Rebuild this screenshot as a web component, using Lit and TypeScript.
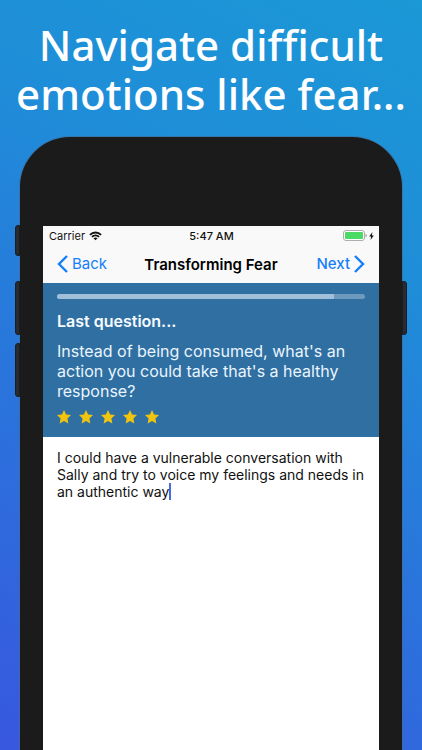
import { LitElement, html, css } from "lit";
import { customElement, property, state } from "lit/decorators.js";

@customElement("star-row")
class StarRow extends LitElement {
  @property({ type: Number }) count = 5;

  static styles = css`
    :host { display: flex; gap: 8px; }
    .star { width: 14px; height: 14px; display: block; fill: #f1c40f; }
  `;

  render() {
    return Array.from({ length: this.count }, () => html`
      <svg class="star" viewBox="0 0 28 28" aria-hidden="true">
        <path d="M14 0 18.200 9 28 10.200 20.800 17 22.700 27 14 22 5.300 27 7.200 17 0 10.200 9.800 9Z"/>
      </svg>`);
  }
}

@customElement("status-bar")
class StatusBar extends LitElement {
  static styles = css`
    :host {
      display: grid;
      grid-template-columns: 1fr auto 1fr;
      align-items: center;
      height: 19px;
      padding: 0 5px 0 6px;
      font-size: 11px;
      color: #111;
    }
    .left, .right { display: flex; align-items: center; }
    .left { gap: 4px; }
    .right { justify-content: flex-end; gap: 2px; }
    .time { font-weight: 500; }
    .icon { display: block; }
  `;

  render() {
    return html`
      <div class="left">
        <span>Carrier</span>
        <svg class="icon" width="13" height="10" viewBox="0 0 28 20" aria-label="Wi-Fi">
          <g fill="none" stroke="#111" stroke-width="4">
            <path d="M2 7.500C8.800 .8 19.200 .8 26 7.500"/>
            <path d="M6.300 12C10.600 7.800 17.400 7.800 21.700 12"/>
          </g>
          <path d="M9.600 14.800C12.100 12.400 15.900 12.400 18.400 14.800L14 19.200Z" fill="#111"/>
        </svg>
      </div>
      <time class="time">5:47 AM</time>
      <div class="right">
        <svg class="icon" width="24" height="11" viewBox="0 0 48 22" aria-label="Battery charging">
          <rect x="1" y="1" width="42" height="20" rx="5" fill="#fff" stroke="#999" stroke-width="1.600"/>
          <rect x="4" y="4" width="36" height="14" rx="2" fill="#4cd964"/>
          <path d="M45 7.500Q47.500 8.500 47.500 11T45 14.500Z" fill="#999"/>
        </svg>
        <svg class="icon" width="5" height="8" viewBox="0 0 10 16" aria-hidden="true">
          <path d="M7 0 .3 9H4.300L3 16 9.700 6.800H5.700Z" fill="#111"/>
        </svg>
      </div>`;
  }
}

@customElement("app-root")
class AppRoot extends LitElement {
  @state() private answer =
    "I could have a vulnerable conversation with Sally and try to voice my feelings and needs in an authentic way";
  @state() private progress = 90;

  static styles = css`
    :host {
      display: flex;
      flex-direction: column;
      box-sizing: border-box;
      min-height: 100vh;
      padding: 20px 20px 0;
      background: linear-gradient(207deg, #1b98d6 0%, #1f8dd8 30%, #2a74dc 62%, #3857df 100%);
      font-family: Inter, "Liberation Sans", sans-serif;
    }
    .headline {
      margin: 0 -20px 19px;
      text-align: center;
      color: #fff;
      font: 500 42px/49px "Noto Sans", "Open Sans", sans-serif;
    }
    .phone {
      position: relative;
      flex: 1;
      display: flex;
      flex-direction: column;
      box-sizing: border-box;
      padding: 89px 23px 0;
      border-radius: 50px 50px 0 0;
      background: #1b1b1b;
      box-shadow: 0 0 0 1px rgba(70, 105, 145, 0.6);
    }
    .key {
      position: absolute;
      width: 5px;
      height: 54px;
      box-sizing: border-box;
      background: #2b2b2b;
      border: 1px solid #141e2a;
    }
    .key.left { right: 100%; border-radius: 3px 0 0 3px; }
    .key.right { left: 100%; border-radius: 0 3px 3px 0; }
    .key.mute { top: 88px; height: 31px; }
    .up, .power { top: 144px; }
    .down { top: 206px; }
    .screen { flex: 1; display: flex; flex-direction: column; background: #fff; }
    .top { background: #f9f9f9; }
    .nav {
      display: grid;
      grid-template-columns: 1fr auto 1fr;
      align-items: center;
      height: 38px;
      padding: 0 14px;
    }
    .title { margin: 0; font-size: 15px; font-weight: 600; color: #000; }
    .link {
      display: flex;
      align-items: center;
      gap: 4px;
      padding: 0;
      border: 0;
      background: none;
      color: #147efb;
      font: 400 15px/20px Inter, "Liberation Sans", sans-serif;
      cursor: pointer;
    }
    .next { justify-self: end; font-weight: 500; }
    .chevron { display: block; fill: none; stroke: #147efb; stroke-width: 2.400; }
    .prompt { padding: 11px 14px 13px; background: #306fa1; color: #e9f5ff; }
    .track { height: 5px; border-radius: 3px; background: #6e9abe; overflow: hidden; }
    .fill { height: 100%; background: #a1bfd8; }
    .lead { margin: 12px 0 10px; font-size: 16px; line-height: 20px; font-weight: 600; color: #f6fbff; }
    .question { margin: 0 0 9px; font-size: 16px; line-height: 20px; }
    .answer { position: relative; flex: 1; display: flex; }
    .field {
      flex: 1;
      min-height: 120px;
      padding: 12px 14px;
      border: 0;
      outline: 0;
      resize: none;
      background: none;
      color: #111;
      font: 400 14px/17px Inter, "Liberation Sans", sans-serif;
    }
    .caret { position: absolute; left: 126px; top: 46px; width: 2px; height: 17px; background: #4a6be0; }
  `;

  render() {
    return html`
      <h1 class="headline">Navigate difficult<br />emotions like fear...</h1>
      <main class="phone">
        <span class="key left mute"></span>
        <span class="key left up"></span>
        <span class="key left down"></span>
        <span class="key right power"></span>
        <div class="screen">
          <header class="top">
            <status-bar></status-bar>
            <nav class="nav">
              <button class="link" type="button">
                <svg class="chevron" width="11" height="18" viewBox="0 0 11 18" aria-hidden="true">
                  <path d="M10 1 2 9l8 8"/>
                </svg>Back
              </button>
              <h2 class="title">Transforming Fear</h2>
              <button class="link next" type="button">
                Next<svg class="chevron" width="11" height="18" viewBox="0 0 11 18" aria-hidden="true">
                  <path d="M1 1l8 8-8 8"/>
                </svg>
              </button>
            </nav>
          </header>
          <section class="prompt">
            <div class="track" role="progressbar" aria-label="Progress" aria-valuenow=${this.progress}>
              <div class="fill" style="width:${this.progress}%"></div>
            </div>
            <h3 class="lead">Last question...</h3>
            <p class="question">
              Instead of being consumed, what's an action you could take that's a healthy response?
            </p>
            <star-row .count=${5}></star-row>
          </section>
          <div class="answer">
            <textarea
              class="field"
              aria-label="Your answer"
              spellcheck="false"
              .value=${this.answer}
              @input=${(e: Event) => (this.answer = (e.target as HTMLTextAreaElement).value)}
            ></textarea>
            <span class="caret"></span>
          </div>
        </div>
      </main>`;
  }
}
